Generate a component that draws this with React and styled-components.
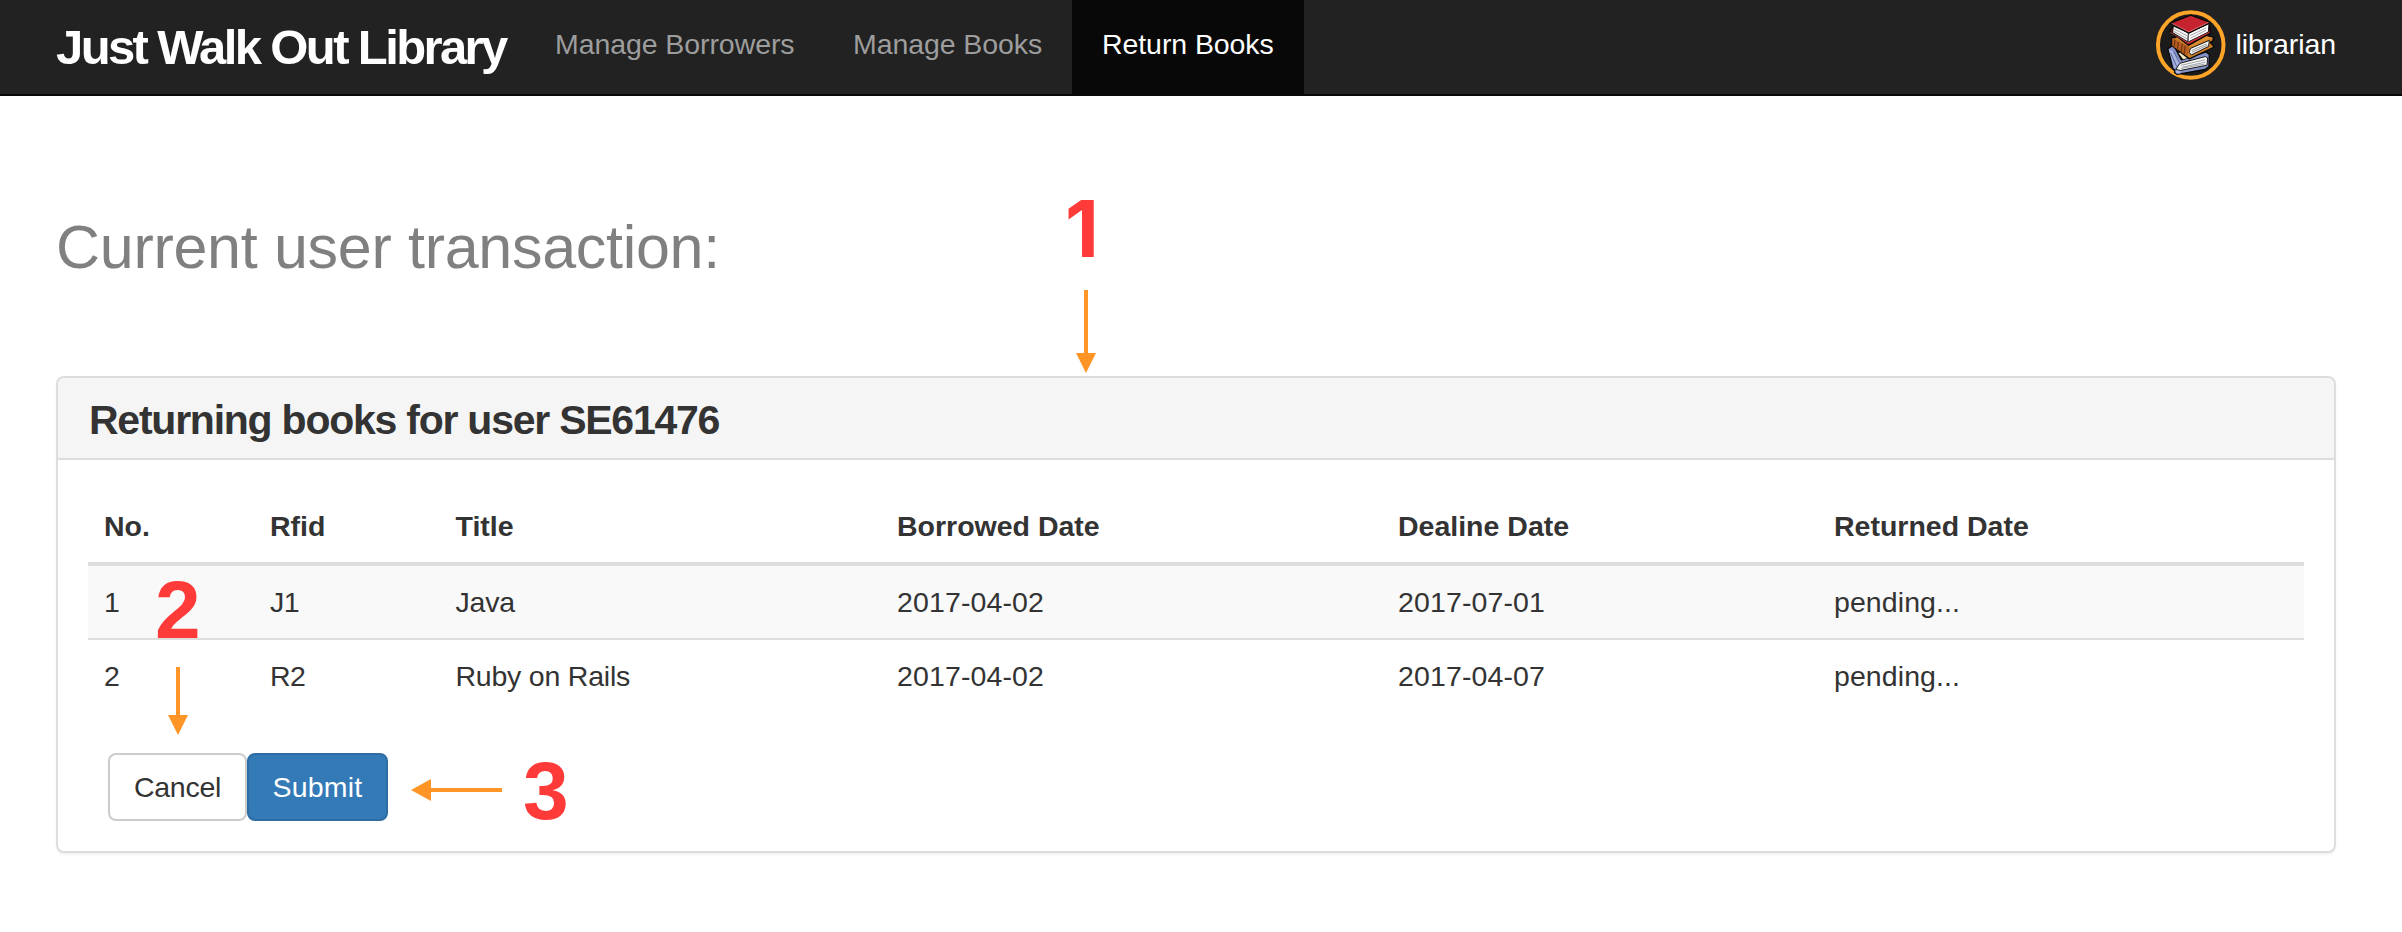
import React from 'react';
import styled, { createGlobalStyle } from 'styled-components';

const GlobalStyle = createGlobalStyle`
  *, *::before, *::after { box-sizing: border-box; }
  body {
    margin: 0;
    background: #fff;
    color: #333;
    font: 28.5px/40px "Liberation Sans", Arial, sans-serif;
  }
`;

const Page = styled.div`
  position: relative;
  min-height: 932px;
  overflow: hidden;
`;

const Navbar = styled.nav`
  display: flex;
  height: 96px;
  padding: 0 66px 0 56px;
  background: #222;
  border-bottom: 2px solid #080808;
`;

const Brand = styled.a`
  width: 468px;
  padding-top: 20px;
  color: #fff;
  font-size: 49px;
  line-height: 54px;
  font-weight: bold;
  letter-spacing: -2.62px;
  white-space: nowrap;
`;

const NavLink = styled.a`
  width: ${(p) => p.$width}px;
  padding: 24px 0 30px ${(p) => (p.$active ? 30 : 31)}px;
  color: ${(p) => (p.$active ? '#fff' : '#9d9d9d')};
  background: ${(p) => (p.$active ? '#080808' : 'transparent')};
  letter-spacing: -0.08px;
  white-space: nowrap;
`;

const User = styled.a`
  display: flex;
  width: 180px;
  margin-left: auto;
  color: #fff;
  letter-spacing: -0.1px;
`;

const Avatar = styled.svg`
  width: 70px;
  height: 70px;
  margin: 10px 10px 0 0;
`;

const UserName = styled.span`
  padding-top: 24px;
`;

const Main = styled.main`
  padding: 117px 66px 0 56px;
`;

const Heading = styled.h2`
  margin: 0 0 95px;
  color: #808080;
  font-size: 61px;
  line-height: 68px;
  font-weight: normal;
  letter-spacing: -0.3px;
`;

const Panel = styled.section`
  border: 2px solid #ddd;
  border-radius: 8px;
  background: #fff;
  box-shadow: 0 2px 2px rgba(0, 0, 0, 0.05);
`;

const PanelHeading = styled.h3`
  height: 82px;
  margin: 0;
  padding: 4px 31px 0;
  border-bottom: 2px solid #ddd;
  border-radius: 6px 6px 0 0;
  background: #f5f5f5;
  font-size: 41px;
  line-height: 76px;
  font-weight: bold;
  letter-spacing: -1.24px;
`;

const PanelBody = styled.div`
  padding: 30px;
`;

const Table = styled.div`
  margin-bottom: 41px;
`;

const Row = styled.div`
  display: grid;
  grid-template-columns: 166px 185.5px 441.5px 501px 436px 1fr;
  padding: 16px 0;
  background: ${(p) => (p.$striped ? '#f9f9f9' : 'transparent')};
  border-top: ${(p) => (p.$ruled ? '2px solid #ddd' : '0')};
`;

const HeaderRow = styled(Row)`
  font-weight: bold;
  border-bottom: 4px solid #ddd;
`;

const Cell = styled.span`
  padding: 0 16px;
  letter-spacing: ${(p) => p.$spacing || 0}px;
`;

const Actions = styled.div`
  display: flex;
  padding-left: 20px;
`;

const Button = styled.button`
  width: ${(p) => p.$width}px;
  height: 68px;
  padding: 0;
  border: 2px solid ${(p) => (p.$primary ? '#2e6da4' : '#ccc')};
  border-radius: 8px;
  background: ${(p) => (p.$primary ? '#337ab7' : '#fff')};
  color: ${(p) => (p.$primary ? '#fff' : '#333')};
  font: inherit;
  line-height: 64px;
  letter-spacing: ${(p) => (p.$primary ? 0.2 : -0.25)}px;
`;

const StepNumber = styled.span`
  position: absolute;
  left: ${(p) => p.$x}px;
  top: ${(p) => p.$y}px;
  color: #ff3b3a;
  font-family: ${(p) => (p.$plain ? 'Inter' : '"Liberation Sans"')}, sans-serif;
  font-size: ${(p) => (p.$plain ? 78.5 : 82)}px;
  line-height: 80px;
  font-weight: bold;
`;

const Arrow = styled.svg`
  position: absolute;
  left: ${(p) => p.$x}px;
  top: ${(p) => p.$y}px;
  fill: #ff9526;
`;

const columns = ['No.', 'Rfid', 'Title', 'Borrowed Date', 'Dealine Date', 'Returned Date'];
const spacing = [0, -0.5, -0.22, 0.12, 0.12, 0.08];
const loans = [
  ['1', 'J1', 'Java', '2017-04-02', '2017-07-01', 'pending...'],
  ['2', 'R2', 'Ruby on Rails', '2017-04-02', '2017-04-07', 'pending...'],
];

function BooksAvatar() {
  return (
    <Avatar viewBox="0 0 210 210">
      <circle cx="105" cy="105" r="99" fill="#1b1b1b" stroke="#fda429" strokeWidth="12" />
      <g strokeLinejoin="round" strokeLinecap="round">
        <path d="M36 116 53 105 77 150 152 126 161 134 160 170 148 179 64 194 56 188 57 181 51 177Z" fill="#8491c7" stroke="#080808" strokeWidth="4" />
        <path d="m38 117 13 7 24 35-2 32-11 0-3-8 4-6-8-6Z" fill="#a9b4e1" />
        <path d="m45 131 17 38M54 126l16 31" stroke="#53618f" strokeWidth="3" />
        <path d="m68 129 14 19 14-4-5-17Z" fill="#f5e9bd" />
        <path d="m73 160 76-20 7 4-2 22-80 16-13-3Z" fill="#f4f4f2" stroke="#171717" strokeWidth="3" />
        <path d="m77 166 70-16m-67 22 68-15m-72 19 69-13" stroke="#777d85" strokeWidth="2" fill="none" />
        <path d="M48 83 137 73 174 82 172 92 164 97 176 111 101 147 49 108Z" fill="#ca7b25" stroke="#080808" strokeWidth="4" />
        <path d="m49 84 51 26-5 28-46-31Z" fill="#b65c22" />
        <path d="m57 91-2 21m12-15-2 22m14-16-3 24m12-18-3 22" stroke="#743611" strokeWidth="4" />
        <path d="m60 82 78-7 33 8-69 29Z" fill="#dc8f30" />
        <path d="m105 115 56-24-2 18-52 26-6-7Z" fill="#fafafa" stroke="#171717" strokeWidth="3" />
        <path d="m109 121 43-19m-43 25 45-21" stroke="#666" strokeWidth="2" />
        <path d="m42 63 12-16 108 0 2 22-66 37Z" fill="#b51524" stroke="#080808" strokeWidth="4" />
        <path d="m53 48 46 20-2 28-46-28Z" fill="#f7f7f7" stroke="#171717" strokeWidth="3" />
        <path d="m99 68 61-27-2 25-61 30Z" fill="#fff" stroke="#171717" strokeWidth="3" />
        <path d="m56 57 38 20m-40-13 38 21m12-9 47-22m-46 30 45-23M99 70l-2 27" fill="none" stroke="#777" strokeWidth="2" />
        <path d="m43 39 62-24 59 22-65 32Z" fill="#c52330" stroke="#080808" strokeWidth="4" />
        <path d="m48 40 51 25 59-28" fill="none" stroke="#ee8b8b" strokeWidth="2" />
        <path d="m44 67 53 32 64-32" fill="none" stroke="#e35358" strokeWidth="2" />
      </g>
    </Avatar>
  );
}

export default function App() {
  return (
    <>
      <GlobalStyle />
      <Page>
        <Navbar>
          <Brand>Just Walk Out Library</Brand>
          <NavLink $width={298}>Manage Borrowers</NavLink>
          <NavLink $width={250}>Manage Books</NavLink>
          <NavLink $width={232} $active>Return Books</NavLink>
          <User>
            <BooksAvatar />
            <UserName>librarian</UserName>
          </User>
        </Navbar>
        <Main>
          <Heading>Current user transaction:</Heading>
          <Panel>
            <PanelHeading>Returning books for user SE61476</PanelHeading>
            <PanelBody>
              <Table>
                <HeaderRow>
                  {columns.map((c) => <Cell key={c}>{c}</Cell>)}
                </HeaderRow>
                {loans.map((loan, i) => (
                  <Row key={loan[0]} $striped={i % 2 === 0} $ruled={i > 0}>
                    {loan.map((value, j) => <Cell key={columns[j]} $spacing={spacing[j]}>{value}</Cell>)}
                  </Row>
                ))}
              </Table>
              <Actions>
                <Button $width={139}>Cancel</Button>
                <Button $width={141} $primary>Submit</Button>
              </Actions>
            </PanelBody>
          </Panel>
        </Main>

        <StepNumber $x={1065} $y={189} $plain>1</StepNumber>
        <Arrow $x={1076} $y={290} width="20" height="83">
          <path d="M8 0h4v63h8L10 83 0 63h8z" />
        </Arrow>
        <StepNumber $x={155} $y={570}>2</StepNumber>
        <Arrow $x={168} $y={667} width="20" height="68">
          <path d="M8 0h4v48h8L10 68 0 48h8z" />
        </Arrow>
        <Arrow $x={411} $y={779} width="91" height="22">
          <path d="M91 9v4H20v9L0 11 20 0v9z" />
        </Arrow>
        <StepNumber $x={523} $y={751}>3</StepNumber>
      </Page>
    </>
  );
}
